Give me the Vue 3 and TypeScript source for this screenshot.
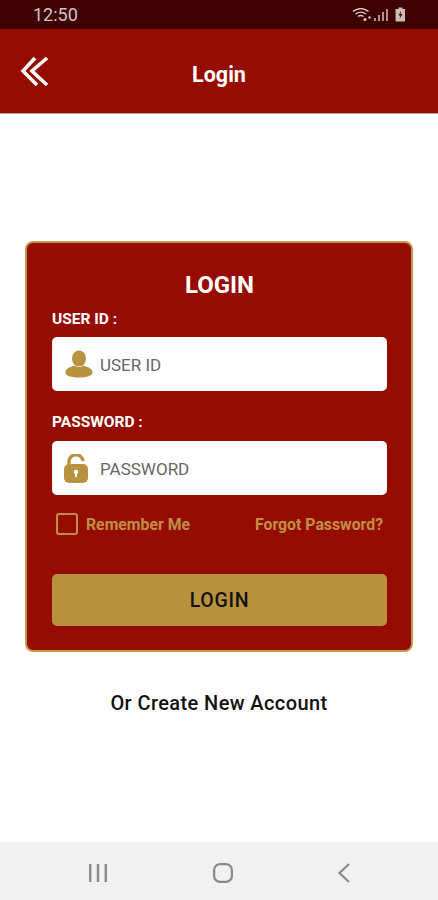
<script setup lang="ts">
import { ref } from 'vue'

const userId = ref('')
const password = ref('')
const remember = ref(false)
</script>

<template>
  <div class="screen">
    <div class="status-bar">
      <span class="clock">12:50</span>
      <div class="status-icons">
        <svg width="22" height="14" viewBox="0 0 22 14">
          <g fill="none" stroke="#d8cccc" stroke-width="1.4">
            <path d="M1 3.4C6 -.2 11.500 -.2 16.500 3.400" />
            <path d="M3.500 6C7 3.500 10.500 3.500 14 6" />
            <path d="M6 8.500C8 7 9.500 7 11.500 8.500" />
          </g>
          <circle cx="13" cy="11.500" r="1.500" fill="#d8cccc" />
          <circle cx="17.500" cy="9.500" r="1.200" fill="#d8cccc" />
        </svg>
        <svg class="signal" width="15" height="14" viewBox="0 0 15 14" fill="#a89595">
          <rect x="0" y="10" width="2" height="3" />
          <rect x="4" y="7" width="2" height="6" />
          <rect x="8" y="4" width="2" height="9" />
          <rect x="12" y="1" width="2" height="12" />
        </svg>
        <svg class="battery" width="11" height="15" viewBox="0 0 11 15">
          <path d="M3.500 0.500h4v1.500h2.500v12.500h-9.500v-12.500h3z" fill="#c9bcbc" />
          <path d="M6 4l-2.500 4.500h2l-1 3.500 3-5h-2z" fill="#3f0000" />
        </svg>
      </div>
    </div>

    <header class="app-bar">
      <svg class="back" width="30" height="32" viewBox="0 0 30 32" fill="none" stroke="#fff" stroke-width="3.600">
        <path d="M15 2L3 15l14 14" />
        <path d="M27 2L12 15l15 14" />
      </svg>
      <h1>Login</h1>
    </header>

    <main class="content">
      <form class="card" @submit.prevent>
        <h2>LOGIN</h2>

        <label class="field-label" for="user-id">USER ID :</label>
        <div class="input-box">
          <svg class="icon" width="28" height="28" viewBox="0 0 28 28" fill="#b8923f">
            <ellipse cx="14" cy="8.500" rx="7" ry="8" />
            <path d="M10 15.500C5 17 0.500 18.500 0.500 22.500C0.500 26 6 27.500 14 27.500S27.500 26 27.500 22.500C27.500 18.500 23 17 18 15.500C16 17.500 12 17.500 10 15.500Z" />
          </svg>
          <input id="user-id" v-model="userId" placeholder="USER ID" />
        </div>

        <label class="field-label second" for="password">PASSWORD :</label>
        <div class="input-box">
          <svg class="icon lock" width="24" height="29" viewBox="0 0 24 29">
            <path d="M5 12V8.500a7 7 0 0 1 14 -1.500" fill="none" stroke="#b8923f" stroke-width="3.400" />
            <rect x="0" y="10" width="24" height="19" rx="5" fill="#b8923f" />
            <circle cx="12" cy="18" r="2.200" fill="#fff" />
            <rect x="11" y="18" width="2" height="5" fill="#fff" />
          </svg>
          <input id="password" v-model="password" type="password" placeholder="PASSWORD" />
        </div>

        <div class="options">
          <label class="remember">
            <input v-model="remember" type="checkbox" />
            <span>Remember Me</span>
          </label>
          <a class="forgot" href="#">Forgot Password?</a>
        </div>

        <button class="submit" type="submit">LOGIN</button>
      </form>

      <p class="create">Or Create New Account</p>
    </main>

    <nav class="nav-bar">
      <svg width="20" height="20" viewBox="0 0 20 20" fill="#8a8a8a">
        <rect x="1" y="1" width="2.400" height="18" />
        <rect x="8.800" y="1" width="2.400" height="18" />
        <rect x="16.600" y="1" width="2.400" height="18" />
      </svg>
      <svg width="20" height="20" viewBox="0 0 20 20" fill="none" stroke="#8a8a8a" stroke-width="2.200">
        <rect x="1.100" y="1.100" width="17.800" height="17.800" rx="6" />
      </svg>
      <svg width="14" height="20" viewBox="0 0 14 20" fill="none" stroke="#8a8a8a" stroke-width="2.200">
        <path d="M12 1L2.500 10L12 19" />
      </svg>
    </nav>
  </div>
</template>

<style scoped>
.screen {
  display: flex;
  flex-direction: column;
  width: 438px;
  height: 900px;
  overflow: hidden;
  background: #fff;
  font-family: Roboto, "Liberation Sans", sans-serif;
}

.status-bar {
  display: flex;
  justify-content: space-between;
  align-items: center;
  flex: none;
  height: 29px;
  padding: 0 32px 0 33px;
  box-sizing: border-box;
  background: #3f0000;
}

.clock {
  font-size: 18px;
  color: #cfc4c4;
}

.status-icons {
  display: flex;
  align-items: center;
  gap: 1px;
}

.signal {
  margin-left: -1px;
}

.battery {
  margin-left: 5px;
}

.app-bar {
  position: relative;
  display: flex;
  justify-content: center;
  align-items: center;
  flex: none;
  height: 85px;
  padding-top: 6px;
  box-sizing: border-box;
  border-bottom: 1px solid #b9a3a0;
  background: #960c00;
}

.back {
  position: absolute;
  left: 20px;
  top: 27px;
}

.app-bar h1 {
  margin: 0;
  font-size: 21.500px;
  font-weight: 700;
  color: #fff;
}

.content {
  flex: 1;
  padding: 127px 25px 0;
}

.card {
  display: flex;
  flex-direction: column;
  height: 411px;
  padding: 0 24px 0 25px;
  box-sizing: border-box;
  border: 2px solid #c29a4f;
  border-radius: 8px;
  background: #960c00;
}

.card h2 {
  margin: 27px 0 0;
  font-size: 24px;
  line-height: 30px;
  font-weight: 700;
  text-align: center;
  color: #fff;
}

.field-label {
  margin-top: 9px;
  font-size: 15.500px;
  line-height: 20px;
  font-weight: 700;
  color: #fff;
}

.field-label.second {
  margin-top: 21px;
  line-height: 21px;
}

.input-box {
  display: flex;
  align-items: center;
  flex: none;
  height: 54px;
  margin-top: 8px;
  padding-left: 13px;
  box-sizing: border-box;
  border-radius: 5px;
  background: #fff;
}

.icon {
  flex: none;
}

.icon.lock {
  margin: 0 5px 0 -1px;
}

.input-box input {
  flex: 1;
  min-width: 0;
  margin-left: 7px;
  padding: 1px 0 0;
  border: none;
  outline: none;
  background: transparent;
  font: 400 17px Roboto, "Liberation Sans", sans-serif;
  color: #555;
}

.input-box input::placeholder {
  color: #666;
  opacity: 1;
}

.options {
  display: flex;
  justify-content: space-between;
  align-items: center;
  margin-top: 18px;
  padding: 0 4px;
  font-size: 15.800px;
  font-weight: 700;
  color: #c08f45;
}

.remember {
  display: flex;
  align-items: center;
  gap: 8px;
}

.remember input {
  width: 22px;
  height: 22px;
  margin: 0;
  appearance: none;
  box-sizing: border-box;
  border: 2px solid #c08f45;
  border-radius: 3px;
}

.forgot {
  color: #c08f45;
  text-decoration: none;
}

.submit {
  flex: none;
  height: 52px;
  margin-top: 39px;
  padding-top: 2px;
  border: none;
  border-radius: 5px;
  background: #b8923f;
  font: 500 19.500px Roboto, "Liberation Sans", sans-serif;
  letter-spacing: 0.700px;
  color: #111;
}

.create {
  margin: 39px 0 0;
  font-size: 20px;
  line-height: 24px;
  font-weight: 500;
  letter-spacing: 0.400px;
  text-align: center;
  color: #111;
}

.nav-bar {
  display: flex;
  justify-content: space-between;
  align-items: center;
  flex: none;
  height: 58px;
  padding: 4px 87px 0 88px;
  box-sizing: border-box;
  background: #f1f1f1;
}
</style>

<style>
body {
  margin: 0;
}
</style>
